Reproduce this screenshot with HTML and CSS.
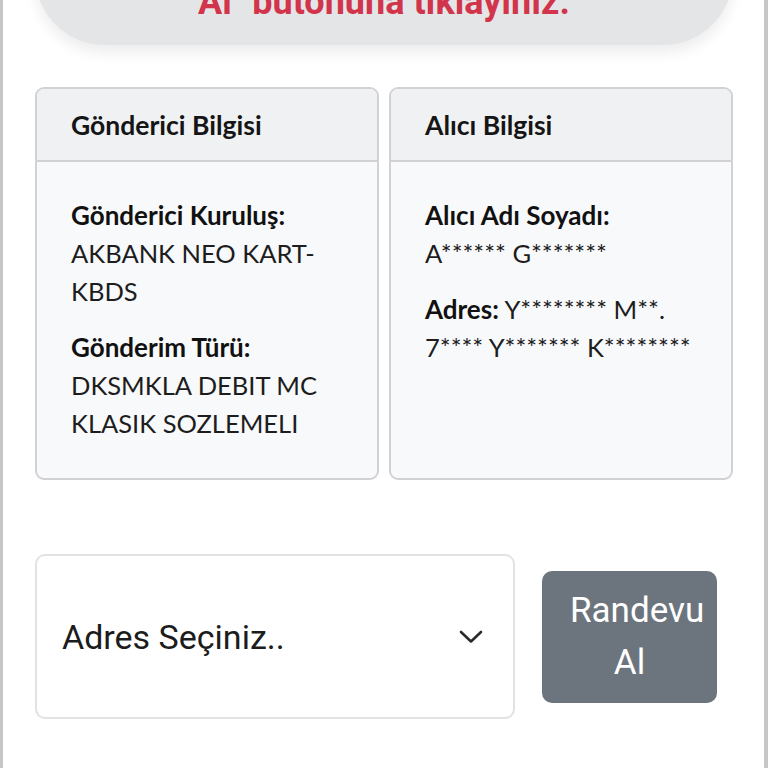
FILE: index.html
```html
<!DOCTYPE html>
<html lang="tr">
<head>
<meta charset="utf-8">
<title>Randevu</title>
<link rel="stylesheet" href="styles.css">
</head>
<body>
<div class="frame">
  <div class="banner"><p class="banner-text">Al" butonuna tıklayınız.</p></div>

  <div class="cards">
    <section class="card">
      <header class="card-head">Gönderici Bilgisi</header>
      <div class="card-body">
        <div class="field">
          <div class="label">Gönderici Kuruluş:</div>
          <div class="value">AKBANK NEO KART-<br>KBDS</div>
        </div>
        <div class="field">
          <div class="label">Gönderim Türü:</div>
          <div class="value">DKSMKLA DEBIT MC<br>KLASIK SOZLEMELI</div>
        </div>
      </div>
    </section>
    <section class="card">
      <header class="card-head">Alıcı Bilgisi</header>
      <div class="card-body">
        <div class="field">
          <div class="label">Alıcı Adı Soyadı:</div>
          <div class="value">A****** G*******</div>
        </div>
        <div class="field">
          <div class="value"><span class="label-inline">Adres:</span> Y******** M**.<br>7**** Y******* K********</div>
        </div>
      </div>
    </section>
  </div>

  <div class="actions">
    <div class="select">
      <span class="select-text">Adres Seçiniz..</span>
      <svg class="chevron" width="24" height="14" viewBox="0 0 24 14"><path d="M2 2 L12 11.5 L22 2" fill="none" stroke="#2b2b2b" stroke-width="2.6" stroke-linecap="round" stroke-linejoin="round"/></svg>
    </div>
    <button class="btn">Randevu Al</button>
  </div>
</div>
</body>
</html>
```
FILE: styles.css
```css
html, body {
  margin: 0;
  padding: 0;
  background: #ffffff;
}
.frame {
  box-sizing: border-box;
  width: 768px;
  min-height: 768px;
  border-left: 3px solid #c6c6c6;
  border-right: 4px solid #c6c6c6;
  padding: 0 31px 0 32px;
  overflow: hidden;
  font-family: Lato, "Noto Sans", sans-serif;
  color: #151515;
}
.banner {
  box-sizing: border-box;
  height: 140px;
  margin-top: -95px;
  background: #e4e5e7;
  border-radius: 90px;
  box-shadow: 0 8px 14px rgba(0, 0, 0, 0.07);
  display: flex;
  align-items: flex-end;
  justify-content: center;
  padding-bottom: 25px;
}
.banner-text {
  margin: 0;
  font-family: Roboto, "Noto Sans", sans-serif;
  font-weight: 700;
  font-size: 36px;
  line-height: 36px;
  color: #d2344b;
}
.cards {
  margin-top: 42px;
  display: grid;
  grid-template-columns: 1fr 1fr;
  gap: 10px;
}
.card {
  border: 2px solid #d2d2d4;
  border-radius: 9px;
  background: #f8f9fb;
  overflow: hidden;
  display: flex;
  flex-direction: column;
}
.card-head {
  box-sizing: border-box;
  height: 73px;
  background: #f0f1f3;
  border-bottom: 2px solid #d2d2d4;
  padding: 0 34px;
  display: flex;
  align-items: center;
  font-weight: 700;
  font-size: 26.5px;
}
.card-body {
  padding: 34px 16px 36px 34px;
}
.field + .field {
  margin-top: 18px;
}
.label, .label-inline {
  font-weight: 700;
  font-size: 26px;
  line-height: 38px;
  color: #111;
}
.value {
  font-size: 25.5px;
  line-height: 38px;
  color: #1d1d1d;
}
.actions {
  margin-top: 74px;
  display: flex;
  align-items: center;
  gap: 27px;
}
.select {
  box-sizing: border-box;
  width: 480px;
  height: 165px;
  border: 2px solid #e2e2e2;
  border-radius: 10px;
  background: #fff;
  display: flex;
  align-items: center;
  justify-content: space-between;
  padding: 0 30px 0 25px;
}
.select-text {
  font-family: Roboto, "Noto Sans", sans-serif;
  font-size: 34px;
  color: #1c1c1c;
}
.chevron {
  display: block;
}
.btn {
  box-sizing: border-box;
  width: 175px;
  height: 132px;
  border: none;
  border-radius: 10px;
  background: #6c757d;
  color: #fff;
  font-family: Roboto, "Noto Sans", sans-serif;
  font-size: 35px;
  line-height: 52px;
  padding: 0 28px;
  text-align: center;
}
```
